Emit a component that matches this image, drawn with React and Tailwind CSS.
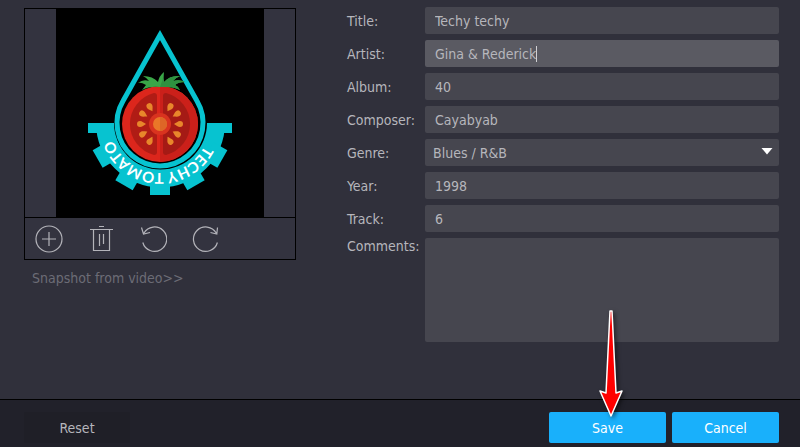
import { useState } from "react";

const TEXT_FIELDS_TOP = [
  { id: "title", label: "Title:" },
  { id: "artist", label: "Artist:" },
  { id: "album", label: "Album:" },
  { id: "composer", label: "Composer:" },
];

const TEXT_FIELDS_BOTTOM = [
  { id: "year", label: "Year:" },
  { id: "track", label: "Track:" },
];

const GENRES = ["Blues / R&B", "Classical", "Country", "Jazz", "Pop", "Rock"];

const START_TAGS = {
  title: "Techy techy",
  artist: "Gina & Rederick",
  album: "40",
  composer: "Cayabyab",
  genre: "Blues / R&B",
  year: "1998",
  track: "6",
  comments: "",
};

// seed positions on the left half, with the angle that points them at the core
const SEEDS = [
  { x: -10, y: -17, turn: 150 },
  { x: -17, y: -10, turn: 120 },
  { x: -19, y: 0, turn: 90 },
  { x: -17, y: 10, turn: 60 },
  { x: -10, y: 17, turn: 30 },
];

const GEAR_TEETH = [-90, -60, -30, 0, 30, 60, 90];

function Seeds() {
  return SEEDS.map((s) => (
    <path
      key={s.turn}
      d="M0 -5 C1 -3 3 -1 3 1 A3 3 0 0 1 -3 1 C-3 -1 -1 -3 0 -5Z"
      transform={`translate(${s.x} ${s.y}) rotate(${s.turn})`}
      fill="#e8862b"
    />
  ));
}

function CoverArt() {
  return (
    <svg viewBox="0 0 208 208" className="size-52 bg-black" role="img" aria-label="Cover art">
      <defs>
        <path id="badge-arc" d="M154 114 A50 50 0 0 1 54 114" />
        <clipPath id="lower-half">
          <rect x="0" y="114" width="208" height="94" />
        </clipPath>
      </defs>

      {/* gear */}
      <g fill="#07c3d0" clipPath="url(#lower-half)">
        <path d="M58 114 A46 46 0 0 0 151 114 H169 A64 64 0 0 1 40 114Z" />
        {GEAR_TEETH.map((a) => (
          <rect key={a} x="94" y="170" width="20" height="16" transform={`rotate(${a} 104 114)`} />
        ))}
      </g>
      <text fill="#fff" fontFamily="Lato, sans-serif" fontWeight="700" fontSize="15">
        <textPath href="#badge-arc" startOffset="52%" textAnchor="middle">
          TECHY TOMATO
        </textPath>
      </text>

      {/* drop outline */}
      <path
        d="M104 26 L67 92 A43 43 0 1 0 141 92Z"
        fill="none"
        stroke="#07c3d0"
        strokeWidth="5"
        strokeMiterlimit="10"
      />

      {/* tomato */}
      <circle cx="104" cy="115" r="38" fill="#dc261c" />
      <path d="M104 77 A38 38 0 0 1 104 153Z" fill="#cb201a" />
      <path d="M98 84 Q101 84 101 87 V143 Q101 146 98 146 A32 32 0 0 1 98 84Z" fill="#b01c15" />
      <path d="M110 84 Q107 84 107 87 V143 Q107 146 110 146 A32 32 0 0 0 110 84Z" fill="#a51a15" />
      <circle cx="104" cy="115" r="11" fill="#d9331f" />
      <circle cx="104" cy="115" r="7" fill="#ea7728" />
      <path d="M104 108 A7 7 0 0 1 104 122Z" fill="#dd6627" />
      <g transform="translate(104 115)">
        <Seeds />
        <g transform="scale(-1 1)">
          <Seeds />
        </g>
      </g>
      <path
        d="M86 81 L90 76 Q85 73 82 74 Q87 70 93 72 Q91 69 87 67 Q97 67 102 73 Q103 67 108 63 Q107 69 108 73 Q114 66 124 67 Q119 69 117 72 Q124 70 129 73 Q122 73 119 76 Q122 77 124 81 Q115 77 104 78 Q94 77 86 81Z"
        fill="#3aa648"
      />
      <path
        d="M104 78 Q107 71 108 63 Q107 69 108 73 Q114 66 124 67 Q119 69 117 72 Q124 70 129 73 Q122 73 119 76 Q122 77 124 81 Q115 77 104 78Z"
        fill="#2f9140"
      />
    </svg>
  );
}

function ToolButton({ label, children }) {
  return (
    <button type="button" aria-label={label} className="size-7">
      <svg
        viewBox="0 0 28 28"
        className="size-7"
        fill="none"
        stroke="#b4b4ba"
        strokeWidth="1.2"
      >
        {children}
      </svg>
    </button>
  );
}

function CoverPanel() {
  return (
    <section className="w-[272px] shrink-0">
      <div className="border border-black bg-[#33333f]">
        <div className="flex justify-center border-b border-black">
          <CoverArt />
        </div>
        <div className="flex h-[41px] items-center gap-6 px-2.5">
          <ToolButton label="Add cover">
            <circle cx="14" cy="14" r="13" />
            <path d="M14 7 V21 M7 14 H21" />
          </ToolButton>
          <ToolButton label="Delete cover">
            <path d="M3 4.5 H26 M12 1.5 H17 M6.5 5 V25.5 H22.5 V5 M12.5 9 V21 M16.5 9 V19" />
          </ToolButton>
          <ToolButton label="Rotate left">
            <path d="M3.8 17.5 A12.2 12.2 0 1 0 5 8 M2.5 2.5 L4.5 9 L11 7.5" />
          </ToolButton>
          <ToolButton label="Rotate right">
            <path d="M26.4 17.5 A12.2 12.2 0 1 1 25.2 8 M26.5 2.5 L25.8 9 L19.5 7.5" />
          </ToolButton>
        </div>
      </div>
      <a href="#snapshot" className="ml-2 mt-2 inline-block text-[#6c6c76]">
        Snapshot from video&gt;&gt;
      </a>
    </section>
  );
}

function TextField({ id, label, value, active, onChange }) {
  return (
    <>
      <label htmlFor={id} className="self-center">
        {label}
      </label>
      <div className="relative">
        <input
          id={id}
          type="text"
          value={value}
          onChange={(e) => onChange(id, e.target.value)}
          className={
            active
              ? "block h-[27px] w-full rounded-xs bg-[#5a5a62] px-2.5 caret-transparent outline-none"
              : "block h-[27px] w-full rounded-xs bg-[#46464f] px-2.5 outline-none"
          }
        />
        {/* text cursor */}
        {active && <span className="absolute left-[111px] top-1.5 h-4 w-px bg-[#d0d0d4]" />}
      </div>
    </>
  );
}

export default function App() {
  const [tags, setTags] = useState(START_TAGS);

  const update = (id, value) => {
    setTags({ ...tags, [id]: value });
  };

  return (
    <div className="flex min-h-screen flex-col bg-[#30303b] font-['DejaVu_Sans_Condensed','Noto_Sans',sans-serif] text-sm text-[#b6b6bc]">
      <main className="flex flex-1 items-start gap-[51px] pl-6 pr-[21px] pt-2">
        <CoverPanel />

        <form id="tags" className="-mt-px grid flex-1 grid-cols-[78px_1fr] gap-y-1.5">
          {TEXT_FIELDS_TOP.map((f) => (
            <TextField
              key={f.id}
              id={f.id}
              label={f.label}
              value={tags[f.id]}
              active={f.id === "artist"}
              onChange={update}
            />
          ))}

          <label htmlFor="genre" className="self-center">
            Genre:
          </label>
          <div className="relative">
            <select
              id="genre"
              value={tags.genre}
              onChange={(e) => update("genre", e.target.value)}
              className="block h-[27px] w-full appearance-none rounded-xs bg-[#46464f] px-2 outline-none"
            >
              {GENRES.map((g) => (
                <option key={g}>{g}</option>
              ))}
            </select>
            <svg
              viewBox="0 0 12 8"
              className="pointer-events-none absolute right-1.5 top-2 h-2 w-3"
              fill="#fff"
            >
              <path d="M0.5 1 H11.5 L6 7.5Z" />
            </svg>
          </div>

          {TEXT_FIELDS_BOTTOM.map((f) => (
            <TextField key={f.id} id={f.id} label={f.label} value={tags[f.id]} onChange={update} />
          ))}

          <label htmlFor="comments" className="leading-4">
            Comments:
          </label>
          <textarea
            id="comments"
            value={tags.comments}
            onChange={(e) => update("comments", e.target.value)}
            className="block h-[104px] w-full resize-none rounded-xs bg-[#46464f] px-2.5 py-1 outline-none"
          />
        </form>
      </main>

      <footer className="flex items-start gap-1.5 border-t border-black bg-[#21212a] pb-1 pl-6 pr-[21px] pt-3">
        <button type="reset" form="tags" className="mr-auto h-[31px] w-[106px] rounded-xs bg-[#1f1f27]">
          Reset
        </button>
        <div className="relative">
          <button type="submit" form="tags" className="h-[31px] w-[117px] rounded-xs bg-[#19b0fb] text-white">
            Save
          </button>
          {/* pointer over the save button */}
          <svg
            viewBox="0 0 28 114"
            className="pointer-events-none absolute bottom-6 left-12 h-[114px] w-7 drop-shadow-[2px_2px_2px_rgba(0,0,0,0.5)]"
          >
            <path
              d="M13 6 L15 6 L19 88 L25 86 L14 111 L3 86 L9 88Z"
              fill="#fe0000"
              stroke="#fff"
              strokeWidth="1.5"
              strokeLinejoin="round"
            />
          </svg>
        </div>
        <button type="button" className="h-[31px] w-[107px] rounded-xs bg-[#19b0fb] text-white">
          Cancel
        </button>
      </footer>
    </div>
  );
}
